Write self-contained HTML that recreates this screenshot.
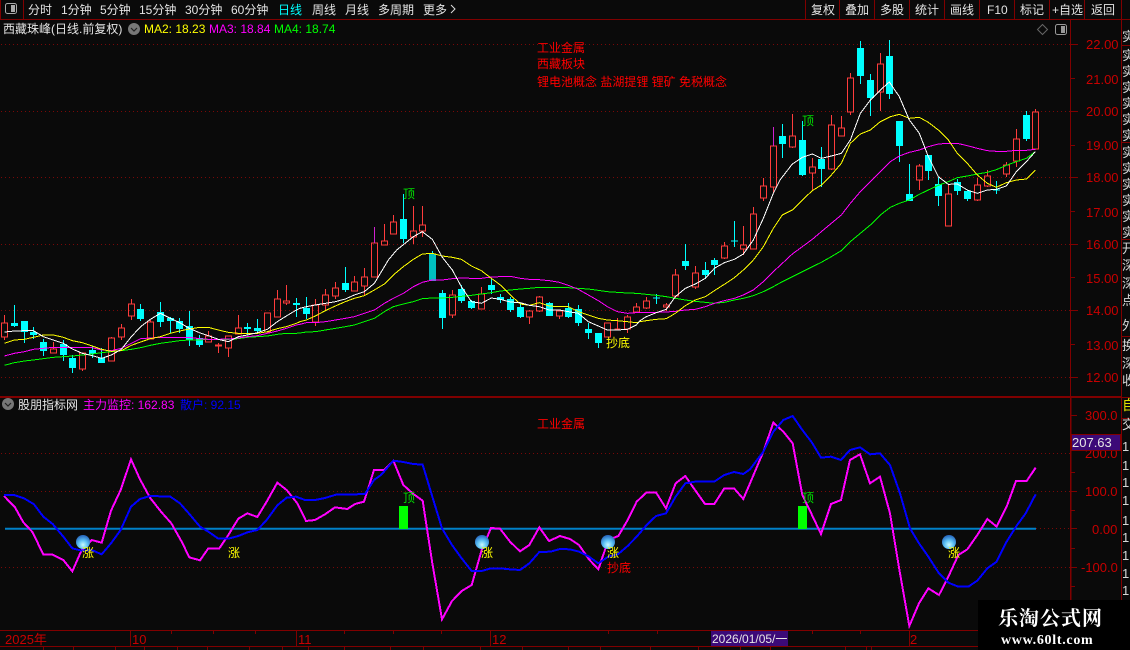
<!DOCTYPE html>
<html><head><meta charset="utf-8"><style>
html,body{margin:0;padding:0;background:#0a0a0a;overflow:hidden}
svg{display:block;font-family:"Liberation Sans","WenQuanYi Zen Hei","Noto Sans CJK SC",sans-serif;font-size:12px}
.m{fill:#e4e4e4}.a{fill:#c80000;font-size:13px}
.w,.y,.p,.g,.P,.B{fill:none;vector-effect:non-scaling-stroke;shape-rendering:crispEdges}
.w{stroke:#fff;stroke-width:1}
.y{stroke:#ff0;stroke-width:1}
.p{stroke:#f0f;stroke-width:1}
.g{stroke:#0f0;stroke-width:1}
.P{stroke:#f0f;stroke-width:2}
.B{stroke:#00f;stroke-width:2}
</style></head><body>
<svg width="1130" height="650" viewBox="0 0 1130 650" xmlns="http://www.w3.org/2000/svg">
<defs><radialGradient id="b" cx=".5" cy=".7" r=".65"><stop offset="0" stop-color="#c8fbff"/><stop offset=".5" stop-color="#5cc0f4"/><stop offset="1" stop-color="#2a6cc0"/></radialGradient></defs>
<rect width="1130" height="650" fill="#0a0a0a"/>
<!-- grid -->
<g stroke="#7a0808" stroke-width="1" stroke-dasharray="1 3" shape-rendering="crispEdges">
<path d="M1 44.5H1070M1 111.5H1070M1 177.5H1070M1 244.5H1070M1 310.5H1070M1 377.5H1070M1 453.5H1070M1 491.5H1070M1 567.5H1070M1036 528.5H1070"/>
</g>
<!-- frame lines -->
<g stroke="#800000" fill="none" shape-rendering="crispEdges">
<path d="M0 19.5H1130M0 396.5H1121M0 397.5H1121M0 630.5H1121M0 646.5H1130M1070.5 19V630M1071 397V630M1121.5 19V600M23.5 0V19M805.5 0V19M839.5 0V19M874.5 0V19M909.5 0V19M944.5 0V19M979.5 0V19M1014.5 0V19M1049.5 0V19M1084.5 0V19M1121.5 0V19M1121 45.5H1130M1121 142.5H1130M1121 239.5H1130M1121 336.5H1130M1121 397.5H1130M1121 418.5H1130M0.5 0V19"/>
<path d="M1071 44.5h7M1071 78.5h4M1071 111.5h7M1071 145.5h4M1071 177.5h7M1071 211.5h4M1071 244.5h7M1071 277.5h4M1071 310.5h7M1071 344.5h4M1071 377.5h7M1071 415.5h6M1071 472.5h4M1071 491.5h6M1071 510.5h4M1071 528.5h6M1071 548.5h4M1071 567.5h6M1071 586.5h4"/>
<path d="M130.5 630V646M296.5 630V646M490.5 630V646M909.5 630V646M171.5 630v4M213.5 630v4M255.5 630v4M344.5 630v4M393.5 630v4M441.5 630v4M608.5 630v4M657.5 630v4M812.5 630v4M860.5 630v4M43.5 646v4M73.5 646v4M115.5 646v4M144.5 646v4M177.5 646v4M207.5 646v4M249.5 646v4M282.5 646v4M308.5 646v4M344.5 646v4M390.5 646v4M423.5 646v4M480.5 646v4M522.5 646v4M568.5 646v4M600.5 646v4M650.5 646v4M698.5 646v4M740.5 646v4M770.5 646v4M845.5 646v4M866.5 646v4M871.5 646v4"/>
</g>
<!-- top bar -->
<rect x="5.5" y="3.5" width="11" height="10" rx="2" fill="none" stroke="#aaa"/><rect x="11" y="5" width="4" height="7" fill="#aaa"/>
<g class="m">
<text x="28" y="14">分时</text><text x="61" y="14">1分钟</text><text x="100" y="14">5分钟</text><text x="139" y="14">15分钟</text><text x="185" y="14">30分钟</text><text x="231" y="14">60分钟</text>
<text x="278" y="14" style="fill:#0ff">日线</text><text x="312" y="14">周线</text><text x="345" y="14">月线</text><text x="378" y="14">多周期</text><text x="423" y="14">更多</text>
<text x="811" y="14">复权</text><text x="845" y="14">叠加</text><text x="880" y="14">多股</text><text x="915" y="14">统计</text><text x="950" y="14">画线</text><text x="987" y="14">F10</text><text x="1020" y="14">标记</text><text x="1052" y="14">+自选</text><text x="1091" y="14">返回</text>
<text x="3" y="33">西藏珠峰(日线.前复权)</text>
<text x="18" y="409">股朋指标网</text>
</g>
<path d="M451 5l4 4-4 4" fill="none" stroke="#ddd"/>
<circle cx="134" cy="29" r="6" fill="#777"/><path d="M131 28l3 3 3-3" fill="none" stroke="#222" stroke-width="1.2"/>
<circle cx="8" cy="404" r="6" fill="#777"/><path d="M5 403l3 3 3-3" fill="none" stroke="#222" stroke-width="1.2"/>
<text x="144" y="33" fill="#ff0">MA2: 18.23</text><text x="209" y="33" fill="#f0f">MA3: 18.84</text><text x="274" y="33" fill="#0f0">MA4: 18.74</text>
<text x="83" y="409" fill="#f0f">主力监控: 162.83</text><text x="180" y="409" fill="#00f">散户: 92.15</text>
<path d="M1042.5 24.5l5 5-5 5-5-5z" fill="none" stroke="#666"/>
<rect x="1055.5" y="24.5" width="11" height="10" rx="2" fill="none" stroke="#999"/><rect x="1061" y="26" width="4" height="7" fill="#999"/>
<!-- info -->
<g fill="#f00"><text x="537" y="52">工业金属</text><text x="537" y="68">西藏板块</text><text x="537" y="86">锂电池概念 盐湖提锂 锂矿 免税概念</text><text x="537" y="428">工业金属</text></g>
<!-- axis -->
<g class="a">
<text x="1086" y="49">22.00</text><text x="1086" y="84">21.00</text><text x="1086" y="116">20.00</text><text x="1086" y="150">19.00</text><text x="1086" y="182">18.00</text><text x="1086" y="217">17.00</text><text x="1086" y="249">16.00</text><text x="1086" y="283">15.00</text><text x="1086" y="315">14.00</text><text x="1086" y="350">13.00</text><text x="1086" y="382">12.00</text>
<text x="1085" y="420">300.0</text><text x="1085" y="458">200.0</text><text x="1085" y="496">100.0</text><text x="1092" y="534">0.00</text><text x="1081" y="572">-100.0</text>
<text x="5" y="644">2025年</text><text x="132" y="644">10</text><text x="298" y="644">11</text><text x="492" y="644">12</text><text x="910" y="644">2</text>
</g>
<rect x="1071.5" y="434.5" width="49" height="16" fill="#3c0a78" stroke="#800000"/><text x="1072" y="447" fill="#e6e6e6" font-size="13">207.63</text>
<rect x="711" y="631" width="77" height="15" fill="#3c0a78"/><text x="712" y="643" fill="#e6e6e6">2026/01/05/一</text>
<!-- candle wicks + bodies: red -->
<path fill="none" stroke="#ff3c3c" shape-rendering="crispEdges" d="M4.5 315V323M1.5 323h6V337h-6zM4.5 337V340M53.5 342V349M50.5 349h6V353h-6zM82.5 353V353M79.5 353h6V369h-6zM82.5 369V371M111.5 337V338M108.5 338h6V361h-6zM121.5 324V328M118.5 328h6V337h-6zM121.5 337V340M131.5 299V304M128.5 304h6V316h-6zM131.5 316V320M150.5 320V322M147.5 322h6V339h-6zM208.5 331V336M205.5 336h6V342h-6zM218.5 343V353M215.5 345h6V346h-6zM228.5 336V336M225.5 336h6V348h-6zM228.5 348V357M238.5 315V328M235.5 328h6V334h-6zM267.5 313V313M264.5 313h6V332h-6zM267.5 332V333M277.5 290V299M274.5 299h6V317h-6zM286.5 285V301M283.5 301h6V303h-6zM286.5 303V305M315.5 299V305M312.5 305h6V322h-6zM315.5 322V326M325.5 289V295M322.5 295h6V305h-6zM325.5 305V310M335.5 282V288M332.5 288h6V296h-6zM335.5 296V299M354.5 276V282M351.5 282h6V291h-6zM364.5 268V277M361.5 277h6V286h-6zM364.5 286V296M371.5 243h6V277h-6zM384.5 224V241M381.5 241h6V245h-6zM393.5 215V222M390.5 222h6V234h-6zM413.5 206V231M410.5 231h6V237h-6zM413.5 237V244M422.5 206V225M419.5 225h6V231h-6zM422.5 231V237M452.5 290V295M449.5 295h6V315h-6zM452.5 315V318M481.5 287V294M478.5 294h6V309h-6zM529.5 310V311M526.5 311h6V317h-6zM529.5 317V324M539.5 296V297M536.5 297h6V311h-6zM539.5 311V312M559.5 311V311M556.5 311h6V316h-6zM559.5 316V319M607.5 323V323M604.5 323h6V337h-6zM617.5 318V329M614.5 329h6M627.5 315V317M624.5 317h6V329h-6zM627.5 329V333M636.5 303V307M633.5 307h6V312h-6zM646.5 297V301M643.5 301h6V308h-6zM646.5 308V309M666.5 303V305M663.5 305h6V307h-6zM666.5 307V311M675.5 269V275M672.5 275h6V296h-6zM675.5 296V298M695.5 266V273M692.5 273h6V287h-6zM695.5 287V289M724.5 242V246M721.5 246h6V258h-6zM724.5 258V259M743.5 226V245M740.5 245h6V249h-6zM743.5 249V255M753.5 207V214M750.5 214h6V249h-6zM763.5 178V186M760.5 186h6V198h-6zM763.5 198V201M770.5 146h6V187h-6zM773.5 187V193M792.5 114V136M789.5 136h6V147h-6zM792.5 147V148M812.5 158V167M809.5 167h6V173h-6zM812.5 173V190M831.5 115V125M828.5 125h6V169h-6zM831.5 169V170M841.5 116V128M838.5 128h6V136h-6zM850.5 73V78M847.5 78h6V112h-6zM850.5 112V115M880.5 53V64M877.5 64h6V92h-6zM880.5 92V111M919.5 164V166M916.5 166h6V180h-6zM919.5 180V190M948.5 184V194M945.5 194h6V226h-6zM977.5 178V185M974.5 185h6V200h-6zM977.5 200V201M987.5 170V176M984.5 176h6V186h-6zM987.5 186V187M1006.5 162V165M1003.5 165h6V174h-6zM1006.5 174V177M1016.5 129V139M1013.5 139h6V161h-6zM1016.5 161V167M1035.5 109V112M1032.5 112h6V149h-6z"/>
<path fill="none" stroke="#d020d0" shape-rendering="crispEdges" d="M374.5 227V243M773.5 127V146"/>
<!-- cyan -->
<path fill="none" stroke="#0ff" shape-rendering="crispEdges" d="M14.5 305V327M24.5 321V343M33.5 327V339M43.5 339V356M63.5 340V361M72.5 355V373M92.5 346V358M101.5 348V363M140.5 304V321M160.5 302V327M170.5 317V333M179.5 318V333M189.5 311V346M199.5 335V347M247.5 323V335M257.5 319V334M296.5 298V317M306.5 297V319M345.5 267V292M403.5 194V243M442.5 290V329M461.5 285V303M471.5 300V309M491.5 278V294M500.5 294V303M510.5 297V312M520.5 303V318M549.5 302V316M568.5 303V318M578.5 305V326M588.5 323V339M598.5 333V348M656.5 294V304M685.5 244V270M705.5 262V279M714.5 258V275M734.5 221V247M782.5 124V158M802.5 121V176M821.5 147V187M860.5 41V84M870.5 74V116M889.5 40V99M899.5 121V162M909.5 164V201M928.5 155V180M938.5 177V206M957.5 179V195M967.5 190V201M996.5 181V194M1026.5 111V141M653 298h7M731 241h7M993 190h7"/>
<path fill="#0ff" d="M11 323h7V326h-7zM21 321h7V332h-7zM30 332h7V335h-7zM40 342h7V351h-7zM60 344h7V355h-7zM69 358h7V368h-7zM89 350h7V354h-7zM98 358h7V363h-7zM137 309h7V319h-7zM157 312h7V322h-7zM167 318h7V321h-7zM176 321h7V329h-7zM186 326h7V340h-7zM196 338h7V345h-7zM244 327h7V329h-7zM254 328h7V331h-7zM293 303h7V305h-7zM303 308h7V314h-7zM342 283h7V290h-7zM400 219h7V239h-7zM439 293h7V318h-7zM458 289h7V301h-7zM468 301h7V308h-7zM488 285h7V290h-7zM497 297h7V300h-7zM507 299h7V310h-7zM517 307h7V317h-7zM546 303h7V316h-7zM565 308h7V317h-7zM575 309h7V323h-7zM585 329h7V333h-7zM595 333h7V343h-7zM682 261h7V266h-7zM702 270h7V275h-7zM711 260h7V265h-7zM779 136h7V144h-7zM799 140h7V175h-7zM818 159h7V169h-7zM857 48h7V76h-7zM867 80h7V98h-7zM886 56h7V94h-7zM896 121h7V146h-7zM906 194h7V201h-7zM925 155h7V171h-7zM935 184h7V196h-7zM954 182h7V191h-7zM964 191h7V199h-7zM1023 115h7V139h-7z"/>
<path fill="#00c0c0" d="M429 254h7V281h-7z"/><path stroke="#0ff" d="M432.5 251v3"/>
<!-- MA lines segment A -->
<g transform="translate(0,280) scale(.33333)">
<polyline class="g" points="13,256 43,248 73,243 100,240 130,236 160,232 190,230 217,228 247,225 277,222 305,218 334,215 364,212 394,208 422,203 451,196 481,190 511,186 539,182 568,180 598,180 625,178 655,178 685,178 715,176 742,172 772,170 802,168 832,163 859,160 889,160 900,159"/>
<polyline class="p" points="13,228 43,220 73,215 100,208 130,205 160,202 190,203 217,202 247,203 277,203 305,210 334,212 364,205 394,190 422,176 451,174 481,172 511,172 539,172 568,172 598,176 625,178 655,178 685,177 715,174 742,170 772,167 802,160 832,153 859,145 889,135 900,133"/>
<polyline class="y" points="13,190 43,180 73,178 100,172 130,165 160,165 190,172 217,182 247,188 277,198 305,208 334,214 364,212 394,196 422,186 451,176 481,170 511,160 539,153 568,147 598,142 625,142 655,150 685,157 715,160 742,160 772,160 802,155 832,146 859,140 889,130 900,125"/>
<polyline class="w" points="13,156 43,153 73,152 100,152 130,170 160,180 190,190 217,207 247,220 277,227 305,235 334,225 364,208 394,170 422,140 451,118 481,100 511,115 539,128 568,145 598,158 625,167 655,178 685,185 715,170 742,165 772,158 802,148 832,125 859,108 889,90 900,85"/>
</g>
<g transform="translate(300,180) scale(.33333)">
<polyline class="g" points="0,459 19,456 46,455 76,450 106,445 136,440 163,435 193,425 223,415 253,395 280,380 310,372 340,365 367,356 397,354 427,354 457,352 484,349 514,346 544,342 574,338 601,333 631,330 661,327 688,325 718,322 748,322 778,322 805,323 835,325 865,327 895,331 922,335 952,337 982,339 1009,340 1020,341"/>
<polyline class="p" points="0,433 19,428 46,428 76,425 106,420 136,415 163,410 193,400 223,390 253,370 280,355 310,340 340,320 367,307 397,300 427,300 457,296 484,294 514,295 544,295 574,291 601,290 631,289 661,295 688,298 718,299 748,302 778,307 805,316 835,328 865,345 895,362 922,380 952,395 982,400 1009,398 1020,398"/>
<polyline class="y" points="0,425 19,420 46,408 76,392 106,378 136,365 163,355 193,347 223,330 253,312 280,285 310,260 340,238 367,222 397,220 427,228 457,232 484,238 514,258 544,272 574,295 601,315 631,345 661,372 688,376 718,368 748,378 778,380 805,380 835,395 865,405 895,415 922,420 952,422 982,425 1009,428 1020,425"/>
<polyline class="w" points="0,385 19,380 46,375 76,370 106,365 136,357 163,345 193,335 223,310 265,240 290,210 340,170 367,155 397,178 427,232 457,270 484,320 514,365 544,370 574,354 601,358 631,366 661,368 688,376 718,380 748,390 778,390 805,395 835,400 865,425 895,438 922,450 952,450 982,448 1009,435 1020,422"/>
</g>
<g transform="translate(640,100) scale(.33333)">
<polyline class="g" points="0,581 19,583 49,586 79,590 106,595 136,600 166,604 196,607 223,610 253,607 283,600 310,595 340,587 370,575 400,560 427,545 457,530 487,515 517,500 544,487 574,470 604,452 631,425 661,400 691,375 721,345 751,322 778,310 808,300 838,283 865,270 895,256 925,245 952,233 982,228 1012,222 1042,217 1069,209 1099,196 1129,185 1159,175 1186,155"/>
<polyline class="p" points="0,638 19,637 49,637 79,636 106,634 136,630 166,628 196,620 223,610 253,602 283,595 310,585 340,570 370,545 400,515 427,490 457,462 487,440 517,418 544,395 574,370 604,345 631,310 661,275 691,245 721,215 751,185 778,168 808,157 838,150 865,140 895,132 925,130 952,130 982,137 1012,145 1042,152 1069,154 1099,154 1129,151 1159,151 1186,148"/>
<polyline class="y" points="0,665 19,662 49,658 79,656 106,640 136,617 166,600 196,590 223,572 253,553 283,533 310,510 340,480 370,440 400,385 427,345 457,330 487,300 517,272 544,255 574,225 604,190 631,130 661,102 691,90 721,65 751,50 778,43 808,55 838,52 865,67 895,90 925,120 952,160 982,190 1012,225 1042,250 1069,262 1099,248 1129,240 1159,237 1186,210"/>
<polyline class="w" points="0,662 19,650 49,638 79,628 106,590 136,565 166,552 196,535 223,505 253,488 283,478 310,462 340,420 370,355 400,280 420,240"/>
</g>
<g transform="translate(780,0) scale(.33333)">
<polyline class="w" points="0,540 37,492 67,472 97,462 124,475 154,468 184,460 211,420 241,340 271,300 301,270 328,246 358,290 388,360 418,400 445,470 475,530 505,553 532,552 562,570 592,580 622,570 649,568 679,558 709,515 739,485 766,455"/>
</g>
<!-- lower panel -->
<path d="M5 528.7H1036" stroke="#0080c8" stroke-width="2"/>
<path fill="#0f0" d="M399 506h9v23h-9zM798 506h9v23h-9z"/>
<g transform="translate(0,400) scale(.33333)">
<polyline class="P" points="12,288 45,322 70,367 98,397 130,464 158,464 190,480 217,514 245,450 275,420 305,428 333,332 362,270 393,178 420,238 450,293 483,335 514,370 545,425 568,472 600,481 625,445 658,445 685,405 715,356 742,340 772,351 800,305 832,248 860,270 892,310 918,363 945,360 975,343 1005,322 1042,327 1065,312 1092,305 1122,210 1140,210"/>
<polyline class="B" points="12,285 42,285 72,295 102,313 130,350 158,372 190,410 217,445 245,452 275,450 305,463 333,430 362,390 393,320 420,297 450,288 483,289 511,290 540,310 568,342 600,380 625,395 655,416 685,416 715,408 742,397 772,390 800,360 832,316 860,293 888,290 915,300 945,300 975,294 1008,284 1042,284 1065,283 1095,282 1122,240 1140,227"/>
</g>
<g transform="translate(380,400) scale(.33333)">
<polyline class="P" points="0,210 12,210 40,182 70,255 100,282 128,302 157,490 186,658 216,603 245,573 275,555 305,450 333,384 360,386 390,425 420,454 448,435 478,382 507,423 540,408 570,417 597,435 627,478 655,508 685,420 715,408 743,360 770,305 800,277 828,277 858,325 887,250 916,228 945,270 975,312 1003,312 1033,265 1062,265 1090,297 1110,250"/>
<polyline class="B" points="0,228 12,215 40,182 70,186 100,192 128,194 157,290 186,385 216,435 245,475 275,513 305,513 333,505 360,505 390,508 420,510 448,490 478,456 512,455 540,447 570,448 597,455 627,470 655,490 685,470 715,462 743,438 770,410 800,375 828,348 858,340 887,290 916,250 945,245 975,245 1003,245 1033,225 1062,216 1090,222 1110,208"/>
</g>
<g transform="translate(750,400) scale(.33333)">
<polyline class="P" points="0,250 40,155 70,68 100,95 128,130 157,285 186,345 213,402 243,312 273,300 300,180 330,163 360,250 390,230 420,340 450,520 478,678 507,610 535,565 567,585 595,530 625,465 652,448 682,405 712,357 740,380 770,320 798,243 830,243 857,203"/>
<polyline class="B" points="0,208 40,155 70,95 100,60 128,48 157,90 186,128 213,173 243,170 273,180 300,150 330,142 360,163 390,160 420,195 450,280 480,385 507,430 535,470 567,520 595,548 625,560 655,560 682,542 712,505 740,485 770,425 798,380 827,340 857,283"/>
</g>
<g fill="url(#b)"><circle cx="83" cy="542" r="7"/><circle cx="482" cy="542" r="7"/><circle cx="608" cy="542" r="7"/><circle cx="949" cy="542" r="7"/></g>
<g fill="#ff0" font-size="12"><text x="82" y="557">涨</text><text x="228" y="557">涨</text><text x="481" y="557">涨</text><text x="607" y="557">涨</text><text x="948" y="557">涨</text><text x="606" y="347">抄底</text></g>
<g fill="#00e000"><text x="403" y="198">顶</text><text x="802" y="125">顶</text><text x="403" y="502">顶</text><text x="802" y="502">顶</text></g>
<text x="607" y="572" fill="#f00">抄底</text>
<!-- right strip -->
<g fill="#d8d8d8" font-size="13">
<text x="1122" y="41">实</text><text x="1122" y="60">实</text><text x="1122" y="76">实</text><text x="1122" y="92">实</text><text x="1122" y="108">实</text><text x="1122" y="124">实</text><text x="1122" y="140">实</text><text x="1122" y="157">实</text><text x="1122" y="173">实</text><text x="1122" y="189">实</text><text x="1122" y="205">实</text><text x="1122" y="221">实</text><text x="1122" y="237">实</text>
<text x="1122" y="253">开</text><text x="1122" y="270">深</text><text x="1122" y="288">深</text><text x="1122" y="305">点</text><text x="1122" y="330">外</text><text x="1122" y="350">换</text><text x="1122" y="368">深</text><text x="1122" y="385">收</text><text x="1122" y="429">交</text>
<text x="1122" y="451">1</text><text x="1122" y="470">1</text><text x="1122" y="487">1</text><text x="1122" y="505">1</text><text x="1122" y="525">1</text><text x="1122" y="542">1</text><text x="1122" y="560">1</text><text x="1122" y="578">1</text><text x="1122" y="595">1</text>
</g>
<text x="1122" y="410" fill="#e0e000" font-size="14">自</text>
<!-- watermark -->
<rect x="978" y="600" width="152" height="50" fill="#000"/>
<text x="998" y="625" fill="#fff" font-size="20" font-weight="bold" letter-spacing="1" style="font-family:'Noto Serif CJK SC',serif">乐淘公式网</text>
<text x="1001" y="644" fill="#fff" font-size="14" font-weight="bold" letter-spacing=".7" style="font-family:'Liberation Serif',serif">www.60lt.com</text>
</svg>
</body></html>
